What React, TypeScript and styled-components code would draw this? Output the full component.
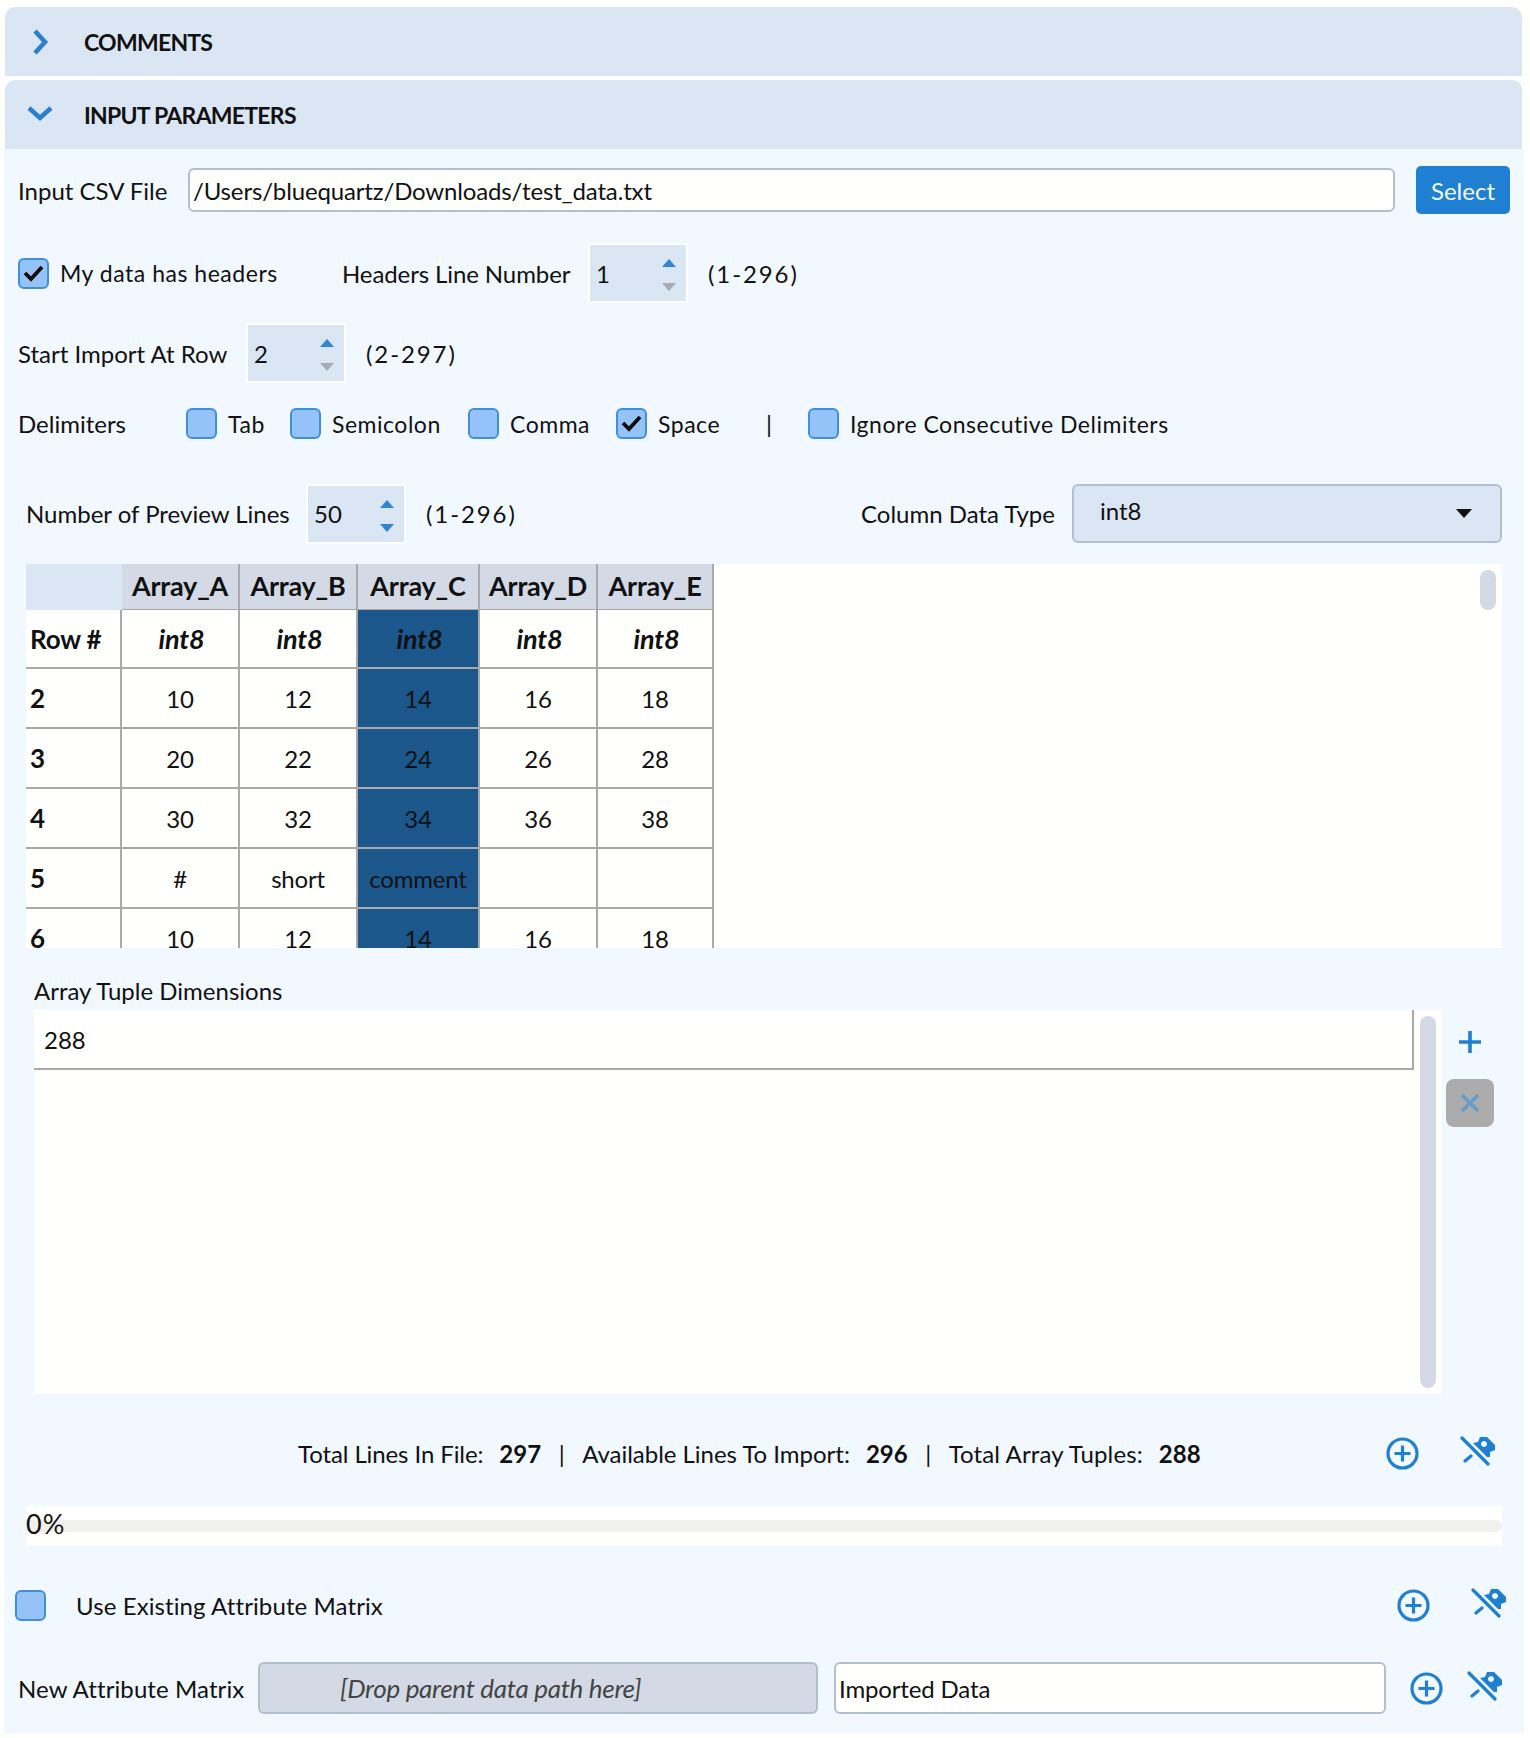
import styled, { createGlobalStyle } from "styled-components";

const GlobalStyle = createGlobalStyle`
  body {
    margin: 0;
    background: #fffffd;
    font-family: 'Lato', 'Liberation Sans', sans-serif;
    color: #111;
  }
`;

const Page = styled.div`
  width: 1530px;
  height: 1738px;
  padding: 7px 8px 0 5px;
  box-sizing: border-box;
  overflow: hidden;
`;

const AccordionHeader = styled.div<{ $open?: boolean }>`
  height: 69px;
  background: #dbe6f5;
  border-radius: 10px 10px 0 0;
  margin-bottom: ${(p) => (p.$open ? 0 : 4)}px;
  display: flex;
  align-items: center;
  position: relative;
  font-size: 23px;
  font-weight: 700;
  letter-spacing: -0.75px;
  padding-left: 79px;
`;

const ChevronSlot = styled.svg`
  position: absolute;
  left: 20px;
  top: 18px;
`;

const Panel = styled.div`
  background: #f2f8ff;
  margin-left: -1px;
  margin-right: -2px;
  height: 1584px;
  padding-top: 17px;
  box-sizing: border-box;
`;

const Row = styled.div<{ $top: number; $left?: number; $right?: number }>`
  display: flex;
  align-items: center;
  margin-top: ${(p) => p.$top}px;
  padding-left: ${(p) => p.$left ?? 14}px;
  padding-right: ${(p) => p.$right ?? 14}px;
  font-size: 24px;
`;

const Label = styled.span<{ $width?: number; $tight?: number; $pad?: number }>`
  letter-spacing: ${(p) => p.$tight ?? 0}px;
  white-space: nowrap;
  flex: none;
  box-sizing: border-box;
  padding-left: ${(p) => p.$pad ?? 0}px;
  width: ${(p) => (p.$width ? `${p.$width}px` : "auto")};
`;

const Wide = styled.span<{ $width?: number }>`
  letter-spacing: 0.52px;
  font-size: 23px;
  white-space: nowrap;
  flex: none;
  box-sizing: border-box;
  padding-left: 11px;
  width: ${(p) => (p.$width ? `${p.$width}px` : "auto")};
`;

const TextInput = styled.div<{ $width?: number; $tall?: boolean }>`
  height: ${(p) => (p.$tall ? 52 : 44)}px;
  margin-left: ${(p) => (p.$tall ? 16 : 0)}px;
  background: #fffffd;
  border: 2px solid #b2bfd3;
  border-radius: 6px;
  box-sizing: border-box;
  padding-left: 3px;
  display: flex;
  align-items: center;
  letter-spacing: -0.15px;
  ${(p) => (p.$width ? `width: ${p.$width}px; flex: none;` : "flex: 1;")}
`;

const SelectButton = styled.button`
  width: 94px;
  height: 48px;
  margin-left: 21px;
  flex: none;
  border: none;
  border-radius: 5px;
  background: #1f7fd0;
  color: #f4f9ff;
  font-family: inherit;
  font-size: 24px;
`;

const CheckBox = styled.span`
  width: 31px;
  height: 31px;
  flex: none;
  box-sizing: border-box;
  border: 2px solid #3f8fd9;
  border-radius: 6px;
  background: #95c3f7;
  display: flex;
  align-items: center;
  justify-content: center;
`;

const SpinBox = styled.div`
  width: 96px;
  height: 56px;
  flex: none;
  box-sizing: border-box;
  box-shadow: 0 0 0 2px #fffffd;
  background: #dbe6f5;
  display: flex;
  align-items: center;
  padding-left: 6px;
  position: relative;
  font-size: 24px;
`;

const SpinArrow = styled.span<{ $down?: boolean; $on?: boolean }>`
  position: absolute;
  right: 10px;
  ${(p) => (p.$down ? "bottom: 10px;" : "top: 14px;")}
  width: 0;
  height: 0;
  border-left: 7px solid transparent;
  border-right: 7px solid transparent;
  ${(p) =>
    p.$down
      ? `border-top: 8px solid ${p.$on ? "#2f86d6" : "#a9adb3"};`
      : `border-bottom: 8px solid #2f86d6;`}
`;

const Range = styled.span`
  margin-left: 22px;
  letter-spacing: 1.9px;
  white-space: nowrap;
  font-size: 24px;
`;

const Spacer = styled.span`
  flex: 1;
`;

const SelectBox = styled.div`
  width: 430px;
  height: 59px;
  flex: none;
  margin-left: 17px;
  box-sizing: border-box;
  background: #dbe6f5;
  border: 2px solid #b2bfd3;
  border-radius: 6px;
  padding: 0 28px 7px 26px;
  display: flex;
  align-items: center;
  justify-content: space-between;
`;

const Caret = styled.span`
  width: 0;
  height: 0;
  margin-top: 7px;
  border-left: 8px solid transparent;
  border-right: 8px solid transparent;
  border-top: 9px solid #111;
`;

const TablePanel = styled.div`
  margin: 21px 22px 0 22px;
  width: 1476px;
  height: 384px;
  background: #fffffd;
  overflow: hidden;
  position: relative;
`;

const Scroll = styled.div`
  position: absolute;
  right: 6px;
  top: 6px;
  width: 16px;
  height: 40px;
  border-radius: 8px;
  background: #d3dae6;
`;

const Grid = styled.div`
  display: grid;
  width: 688px;
  grid-template-columns: 96px 118px 118px 122px 118px 116px;
  grid-template-rows: 46px 59px repeat(5, 60px);
`;

const HeadCell = styled.div<{ $corner?: boolean }>`
  background: ${(p) => (p.$corner ? "#dbe6f5" : "#d3dae6")};
  ${(p) => (p.$corner ? "" : "border-right: 2px solid #a9a9a9; border-bottom: 1px solid #a9a9a9;")}
  box-sizing: border-box;
  padding-bottom: 3px;
  display: flex;
  align-items: center;
  justify-content: center;
  font-weight: 700;
  font-size: 27px;
  letter-spacing: -0.2px;
`;

const Cell = styled.div<{ $sel?: boolean; $row?: boolean; $type?: boolean }>`
  box-sizing: border-box;
  border-right: 2px solid #a9a9a9;
  border-bottom: 2px solid #a9a9a9;
  background: ${(p) => (p.$sel ? "#1c578c" : "transparent")};
  display: flex;
  align-items: center;
  justify-content: ${(p) => (p.$row ? "flex-start" : "center")};
  padding: ${(p) => (p.$row ? "0 0 0 4px" : p.$type ? "0 0 0 3px" : "0")};
  font-size: ${(p) => (p.$type ? 27 : p.$row ? 26 : 24)}px;
  font-weight: ${(p) => (p.$row || p.$type ? 700 : 400)};
  font-style: ${(p) => (p.$type ? "italic" : "normal")};
  letter-spacing: -0.2px;
  white-space: nowrap;
`;

const TupleLabel = styled.div`
  margin: 30px 0 6px 30px;
  height: 26px;
  line-height: 26px;
  font-size: 24px;
`;

const TupleRow = styled.div`
  display: flex;
  padding-left: 30px;
  align-items: flex-start;
`;

const TupleBox = styled.div`
  width: 1408px;
  height: 384px;
  flex: none;
  background: #fffffd;
  display: flex;
  position: relative;
`;

const TupleCell = styled.div`
  width: 1380px;
  height: 60px;
  box-sizing: border-box;
  border-right: 2px solid #a9a9a9;
  border-bottom: 2px solid #a9a9a9;
  padding-left: 10px;
  font-size: 24px;
  display: flex;
  align-items: center;
`;

const TupleScroll = styled.div`
  position: absolute;
  left: 1386px;
  top: 6px;
  width: 16px;
  height: 372px;
  border-radius: 8px;
  background: #d3dae6;
`;

const TupleActions = styled.div`
  margin-left: 4px;
  width: 48px;
  display: flex;
  flex-direction: column;
  align-items: center;
`;

const AddSvg = styled.svg`
  margin-top: 19px;
  margin-bottom: 24px;
`;

const RemoveButton = styled.div`
  width: 48px;
  height: 48px;
  border-radius: 8px;
  background: #acacac;
  display: flex;
  align-items: center;
  justify-content: center;
`;

const Stats = styled.div`
  display: flex;
  align-items: center;
  height: 40px;
  margin-top: 39px;
  padding: 0 28px 0 294px;
  font-size: 24px;
  white-space: pre;
`;

const Num = styled.b`
  font-weight: 700;
  margin-left: 16px;
`;

const Bar = styled.span`
  margin: 0 17.5px;
`;

const IconGroup = styled.div<{ $gap: number; $left?: number }>`
  display: flex;
  align-items: center;
  gap: ${(p) => p.$gap}px;
  margin-left: ${(p) => (p.$left !== undefined ? `${p.$left}px` : "auto")};
  flex: none;
`;

const Progress = styled.div`
  margin: 33px 22px 0 22px;
  width: 1476px;
  height: 40px;
  background: #fffffd;
  position: relative;
  display: flex;
  align-items: center;
`;

const Track = styled.div`
  position: absolute;
  left: 0;
  right: 0;
  top: 14px;
  height: 12px;
  border-radius: 0 6px 6px 0;
  background: #f0f0ec;
`;

const Percent = styled.span`
  position: relative;
  margin-top: -6px;
  letter-spacing: 1px;
  font-size: 27px;
`;

const DropZone = styled.div`
  width: 560px;
  height: 52px;
  flex: none;
  margin-left: 13px;
  box-sizing: border-box;
  background: #d3dae6;
  border: 2px solid #b2bfd3;
  border-radius: 6px;
  color: #444;
  font-style: italic;
  font-size: 26px;
  padding-left: 80px;
  display: flex;
  align-items: center;
  letter-spacing: -0.3px;
`;

const CheckMark = () => (
  <svg width="21" height="17" viewBox="0 0 21 17">
    <path d="M2 8l6 6 11-12" fill="none" stroke="#0c0c0c" strokeWidth="3.8" />
  </svg>
);

const CirclePlus = () => (
  <svg width="33" height="33" viewBox="0 0 33 33">
    <circle cx="16.5" cy="16.5" r="14.5" fill="none" stroke="#1f7fd0" strokeWidth="3.2" />
    <path d="M16.5 8.5v16M8.5 16.5h16" fill="none" stroke="#1f7fd0" strokeWidth="3.2" />
  </svg>
);

const PinOff = () => (
  <svg width="36" height="36" viewBox="0 0 36 36">
    <path d="M2 3l26 26M5 26l6-5" fill="none" stroke="#1f7fd0" strokeWidth="3.2" strokeLinecap="round" />
    <path
      fillRule="evenodd"
      d="M13 8l5-1 2-5h7l8 8v5l-5 2v5h-3zM24 6a3 3 0 1 0 .01 0z"
      fill="#1f7fd0"
    />
  </svg>
);

const rows = [
  ["2", "10", "12", "14", "16", "18"],
  ["3", "20", "22", "24", "26", "28"],
  ["4", "30", "32", "34", "36", "38"],
  ["5", "#", "short", "comment", "", ""],
  ["6", "10", "12", "14", "16", "18"],
];

const columns = ["Array_A", "Array_B", "Array_C", "Array_D", "Array_E"];

const App = () => {
  return (
    <Page>
      <GlobalStyle />
      <AccordionHeader>
        <ChevronSlot width="28" height="34" viewBox="0 0 28 34">
          <path d="M10 6l10 11-10 11" fill="none" stroke="#2a80cc" strokeWidth="4.6" />
        </ChevronSlot>
        COMMENTS
      </AccordionHeader>
      <AccordionHeader $open>
        <ChevronSlot width="32" height="28" viewBox="0 0 32 28">
          <path d="M4 10l11 10 11-10" fill="none" stroke="#2a80cc" strokeWidth="4.6" />
        </ChevronSlot>
        INPUT PARAMETERS
      </AccordionHeader>
      <Panel>
        <Row $top={0}>
          <Label $width={170}>Input CSV File</Label>
          <TextInput>/Users/bluequartz/Downloads/test_data.txt</TextInput>
          <SelectButton>Select</SelectButton>
        </Row>

        <Row $top={31}>
          <CheckBox>
            <CheckMark />
          </CheckBox>
          <Wide $width={293}>My data has headers</Wide>
          <Label $width={248} $tight={-0.1}>Headers Line Number</Label>
          <SpinBox>
            1
            <SpinArrow />
            <SpinArrow $down />
          </SpinBox>
          <Range>(1-296)</Range>
        </Row>

        <Row $top={24}>
          <Label $width={230}>Start Import At Row</Label>
          <SpinBox>
            2
            <SpinArrow />
            <SpinArrow $down />
          </SpinBox>
          <Range>(2-297)</Range>
        </Row>

        <Row $top={27}>
          <Label $width={168}>Delimiters</Label>
          <CheckBox />
          <Wide $width={73}>Tab</Wide>
          <CheckBox />
          <Wide $width={147}>Semicolon</Wide>
          <CheckBox />
          <Wide $width={117}>Comma</Wide>
          <CheckBox>
            <CheckMark />
          </CheckBox>
          <Wide $width={119}>Space</Wide>
          <Label $width={42}>|</Label>
          <CheckBox />
          <Wide>Ignore Consecutive Delimiters</Wide>
        </Row>

        <Row $top={45} $left={22} $right={22}>
          <Label $width={282}>Number of Preview Lines</Label>
          <SpinBox>
            50
            <SpinArrow />
            <SpinArrow $down $on />
          </SpinBox>
          <Range>(1-296)</Range>
          <Spacer />
          <Label>Column Data Type</Label>
          <SelectBox>
            int8
            <Caret />
          </SelectBox>
        </Row>

        <TablePanel>
          <Grid>
            <HeadCell $corner />
            {columns.map((c) => (
              <HeadCell key={c}>{c}</HeadCell>
            ))}
            <Cell $row>Row #</Cell>
            {columns.map((c, i) => (
              <Cell key={c} $type $sel={i === 2}>
                int8
              </Cell>
            ))}
            {rows.map((r) =>
              r.map((v, i) => (
                <Cell key={r[0] + i} $row={i === 0} $sel={i === 3}>
                  {v}
                </Cell>
              ))
            )}
          </Grid>
          <Scroll />
        </TablePanel>

        <TupleLabel>Array Tuple Dimensions</TupleLabel>
        <TupleRow>
          <TupleBox>
            <TupleCell>288</TupleCell>
            <TupleScroll />
          </TupleBox>
          <TupleActions>
            <AddSvg width="26" height="26" viewBox="0 0 26 26">
              <path d="M13 2v22M2 13h22" fill="none" stroke="#1f7fd0" strokeWidth="3.6" />
            </AddSvg>
            <RemoveButton>
              <svg width="22" height="22" viewBox="0 0 22 22">
                <path d="M3 3l16 16M19 3L3 19" fill="none" stroke="#6a9cc8" strokeWidth="3.8" />
              </svg>
            </RemoveButton>
          </TupleActions>
        </TupleRow>

        <Stats>
          <Label $tight={-0.1}>Total Lines In File:</Label>
          <Num>297</Num>
          <Bar>|</Bar>
          <Label $tight={-0.02}>Available Lines To Import:</Label>
          <Num>296</Num>
          <Bar>|</Bar>
          <Label $tight={0.13}>Total Array Tuples:</Label>
          <Num>288</Num>
          <IconGroup $gap={41}>
            <CirclePlus />
            <PinOff />
          </IconGroup>
        </Stats>

        <Progress>
          <Track />
          <Percent>0%</Percent>
        </Progress>

        <Row $top={41} $left={11} $right={17}>
          <CheckBox />
          <Label $pad={30} $tight={0.1}>
            Use Existing Attribute Matrix
          </Label>
          <IconGroup $gap={41}>
            <CirclePlus />
            <PinOff />
          </IconGroup>
        </Row>

        <Row $top={39}>
          <Label $width={227} $tight={0.1}>New Attribute Matrix</Label>
          <DropZone>[Drop parent data path here]</DropZone>
          <TextInput $width={552} $tall>
            Imported Data
          </TextInput>
          <IconGroup $left={24} $gap={24}>
            <CirclePlus />
            <PinOff />
          </IconGroup>
        </Row>
      </Panel>
    </Page>
  );
};

export default App;
